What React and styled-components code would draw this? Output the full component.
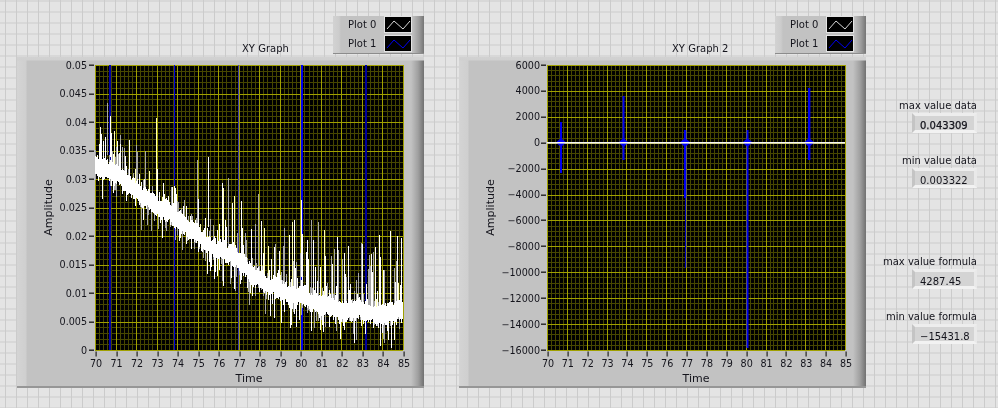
import React from "react";
import styled, { createGlobalStyle } from "styled-components";

const Global = createGlobalStyle`
  html, body { margin: 0; padding: 0; }
  body { width: 998px; height: 408px; overflow: hidden; background: #e3e3e3; font-family: "DejaVu Sans", "Liberation Sans", sans-serif; color: #14141c; }
`;

const Page = styled.div`
  width: 998px; height: 408px; box-sizing: border-box; display: flex; padding: 16px 0 0 17px;
  filter: blur(0.3px);
  background-color: #e4e4e4;
  background-image:
    linear-gradient(to right, #cbcbcb 1.5px, transparent 1.5px),
    linear-gradient(to bottom, #cbcbcb 1.5px, transparent 1.5px);
  background-size: 11px 11px;
  background-position: 5px 0.5px;
`;
const GraphColumn = styled.section`
  width: 407px; display: flex; flex-direction: column; margin-right: ${p => p.$gap}px;
`;
const GraphHeader = styled.header`
  height: 41px; display: flex; justify-content: space-between; align-items: flex-end;
`;
const GraphTitle = styled.h2`
  margin: 0 0 2px; padding-left: ${p => p.$indent}px; font-size: 10px; font-weight: 400; line-height: 13px; white-space: nowrap;
`;
const Legend = styled.div`
  width: 91px; height: 38px; box-sizing: border-box; margin-bottom: 3px; padding: 1px 13px 2px 15px;
  display: flex; flex-direction: column; justify-content: space-between;
  border-bottom: 1px solid #8c8c8c;
  background: linear-gradient(to right, #d2d2d2, #cccccc 6px, #c2c2c2 8px, #c2c2c2 calc(100% - 12px), #9c9c9c calc(100% - 5px), #757575 100%);
`;
const LegendRow = styled.div`
  height: 15px; display: flex; align-items: center; justify-content: space-between; font-size: 10px;
`;
const Swatch = styled.svg`
  width: 26px; height: 15px; display: block; background: #000; box-sizing: border-box; outline: 1px solid #e4e4e4;
`;
const Panel = styled.div`
  height: 331px; box-sizing: border-box; border-bottom: 2px solid #969696;
  background:
    linear-gradient(to bottom, #d2d2d2 0, #d0d0d0 3px, transparent 4px),
    linear-gradient(to right, #d4d4d4, #cfcfcf 9px, #c2c2c2 10px, #c2c2c2 calc(100% - 13px), #a0a0a0 calc(100% - 6px), #717171 100%);
`;
const ChartSvg = styled.svg`
  display: block; width: 407px; height: 329px;
  text { fill: #14141c; font-family: "DejaVu Sans", "Liberation Sans", sans-serif; }
`;
const Readouts = styled.aside`
  width: 65px; margin-left: 46px; padding-top: 82px; display: flex; flex-direction: column; align-items: flex-end;
`;
const Readout = styled.div`
  display: flex; flex-direction: column; align-items: flex-end; margin-bottom: ${p => p.$after}px;
`;
const ReadoutLabel = styled.label`
  font-size: 10px; line-height: 15px; white-space: nowrap;
`;
const ReadoutValue = styled.output`
  display: block; width: 65px; height: 20px; box-sizing: border-box; padding: 3px 0 0 5px; font-size: 10px; line-height: 13px;
  background: #d4d4d4; border: solid 3px; border-color: #ededed #e9e9e9 #f2f2f2 #c4c4c4;
  -webkit-text-stroke: ${p => (p.$strong ? "0.25px" : "0")};
`;

function rng(seed) {
  let a = seed;
  return () => {
    a |= 0; a = (a + 0x6d2b79f5) | 0;
    let t = Math.imul(a ^ (a >>> 15), 1 | a);
    t = (t + Math.imul(t ^ (t >>> 7), 61 | t)) ^ t;
    return ((t ^ (t >>> 14)) >>> 0) / 4294967296;
  };
}

const bandPoints = [[78, 107], [88, 110], [111, 126], [138, 150], [165, 166], [195, 193], [224, 206], [233, 220], [266, 236], [300, 246], [333, 255], [366, 256], [386, 255]];
function bandCenter(x) {
  for (let i = 1; i < bandPoints.length; i++) {
    const [x0, y0] = bandPoints[i - 1];
    const [x1, y1] = bandPoints[i];
    if (x <= x1) return y0 + ((x - x0) / (x1 - x0)) * (y1 - y0);
  }
  return 255;
}

function noisyTrace() {
  const r = rng(4211);
  let white = "", grey = "", pale = "";
  const seg = (x, a, b) => `M${x}.5 ${Math.round(a)}V${Math.round(b)}`;
  let wobble = 0;
  for (let x = 78; x < 386; x++) {
    wobble = wobble * 0.8 + (r() - 0.5) * 3.2;
    const c = bandCenter(x) + wobble;
    const right = x > 200;
    const top = c - 7 - r() * 5;
    const bot = c + 6 + r() * 5;
    white += seg(x, top, bot);
    if (r() < 0.6) {
      const h = Math.pow(r(), 2) * (right ? 70 : 32) + 4;
      const pick = r();
      if (pick < 0.38) grey += seg(x, top - h, top);
      else if (pick < 0.44) pale += seg(x, top - h, top);
      else white += seg(x, top - h, top);
    }
    if (r() < 0.55) {
      const h = Math.pow(r(), 2) * 22 + 2;
      if (r() < 0.4) grey += seg(x, bot, bot + h);
      else white += seg(x, bot, bot + h);
    }
  }
  [[90, 46, 98, 0], [93, 59, 100, 1], [88, 80, 105, 2], [139, 61, 155, 3], [180, 103, 150, 0], [191, 100, 170, 2], [284, 143, 220, 2], [285, 177, 215, 1], [83, 82, 105, 1], [103, 78, 115, 0]].forEach(([x, a, b, kind]) => {
    if (kind === 0) grey += seg(x, a, b);
    else if (kind === 3) pale += seg(x, a, b);
    else white += seg(x, a, b);
  });
  return { white, grey, pale };
}

const PlotFrame = ({ x0, x1, y0, y1, xLabels, yLabels, children, yGap }) => {
  const cols = xLabels.length - 1, rows = yLabels.length - 1;
  const dx = (x1 - x0) / cols, dy = (y1 - y0) / rows;
  const minorV = [], minorH = [], majorV = [], majorH = [];
  for (let i = 0; i <= cols * 5; i++) {
    const x = Math.round(x0 + (i * dx) / 5);
    (i % 5 ? minorV : majorV).push(x);
  }
  for (let i = 0; i <= rows * 5; i++) {
    const y = Math.round(y0 + (i * dy) / 5);
    (i % 5 ? minorH : majorH).push(y);
  }
  const path = (vs, hs) => vs.map(x => `M${x}.5 ${y0}V${y1}`).join("") + hs.map(y => `M${x0} ${y}.5H${x1}`).join("");
  return (
    <>
      <rect x={x0} y={y0} width={x1 - x0} height={y1 - y0} fill="#000" />
      <path d={path(minorV, minorH)} stroke="#464600" strokeWidth="1" shapeRendering="crispEdges" />
      <path d={path(majorV, majorH)} stroke="#a0a000" strokeWidth="1" shapeRendering="crispEdges" />
      {children}
      {yLabels.map((l, i) => (
        <g key={l}>
          <rect x={x0 - 6} y={Math.round(y0 + i * dy) - 0.5} width="5" height="1.4" fill="#222" />
          <text x={x0 - yGap} y={y0 + i * dy + 3.5} fontSize="9.6" textAnchor="end">{l}</text>
        </g>
      ))}
      {xLabels.map((l, i) => (
        <g key={l}>
          <rect x={Math.round(x0 + i * dx) + 0.5} y={y1 + 1.5} width="1.2" height="5" fill="#222" />
          <text x={x0 + i * dx + 1} y={y1 + 17} fontSize="9.6" textAnchor="middle">{l}</text>
        </g>
      ))}
      <text transform={`translate(35 ${(y0 + y1) / 2}) rotate(-90)`} fontSize="11" textAnchor="middle">Amplitude</text>
      <text x={(x0 + x1) / 2} y={y1 + 32} fontSize="11" textAnchor="middle">Time</text>
    </>
  );
};

const xLabels = Array.from({ length: 16 }, (_, i) => String(70 + i));

const LeftChart = () => {
  const t = noisyTrace();
  return (
    <ChartSvg viewBox="0 0 407 329">
      <PlotFrame x0={78} x1={386} y0={8} y1={293} yGap={8} xLabels={xLabels}
        yLabels={["0.05", "0.045", "0.04", "0.035", "0.03", "0.025", "0.02", "0.015", "0.01", "0.005", "0"]}>
        <g shapeRendering="crispEdges">
          <rect x="92" y="8" width="2" height="285" fill="#0000a8" />
          <rect x="157" y="8" width="1" height="285" fill="#0000e0" />
          <rect x="221" y="8" width="1" height="285" fill="#3c3ca8" />
          <rect x="284" y="8" width="2" height="285" fill="#0000f0" />
          <rect x="348" y="8" width="2" height="285" fill="#00009c" />
          <path d={t.grey} stroke="#a8a8a8" />
          <path d={t.pale} stroke="#ffffb4" />
          <path d={t.white} stroke="#fff" />
        </g>
      </PlotFrame>
    </ChartSvg>
  );
};

const blips = [
  { x: 101, top: 65, bot: 116, w: 2 },
  { x: 163.5, top: 39, bot: 103, w: 2 },
  { x: 225, top: 73, bot: 141, w: 2.4 },
  { x: 287.5, top: 73, bot: 291, w: 2 },
  { x: 349, top: 31, bot: 103, w: 2.4 },
];

const RightChart = () => (
  <ChartSvg viewBox="0 0 407 329">
    <PlotFrame x0={88} x1={386} y0={8} y1={293} yGap={7} xLabels={xLabels}
      yLabels={["6000", "4000", "2000", "0", "\u22122000", "\u22124000", "\u22126000", "\u22128000", "\u221210000", "\u221212000", "\u221214000", "\u221216000"]}>
      <rect x="226" y="141" width="1.2" height="70" fill="#0000c0" />
      {blips.map(b => (
        <g key={b.x} fill="#0000f4">
          <rect x={b.x} y={b.top} width={b.w} height={b.bot - b.top} />
          <polygon points={`${b.x - 4},85.5 ${b.x + 1},81 ${b.x + b.w + 4},85.5 ${b.x + 1},90`} />
        </g>
      ))}
      <rect x="88" y="85" width="298" height="1.6" fill="#f4f4f4" />
    </PlotFrame>
  </ChartSvg>
);

const TraceSwatch = ({ color }) => (
  <Swatch viewBox="0 0 26 15">
    <polyline points="2,12 9,4 18,12 25,4" fill="none" stroke={color} strokeWidth="1" />
  </Swatch>
);

const PlotLegend = () => (
  <Legend>
    <LegendRow>Plot 0<TraceSwatch color="#d8d8d8" /></LegendRow>
    <LegendRow>Plot 1<TraceSwatch color="#0000f0" /></LegendRow>
  </Legend>
);

export default function App() {
  return (
    <Page>
      <Global />
      <GraphColumn $gap={35}>
        <GraphHeader><GraphTitle $indent={225}>XY Graph</GraphTitle><PlotLegend /></GraphHeader>
        <Panel><LeftChart /></Panel>
      </GraphColumn>
      <GraphColumn $gap={0}>
        <GraphHeader><GraphTitle $indent={213}>XY Graph 2</GraphTitle><PlotLegend /></GraphHeader>
        <Panel><RightChart /></Panel>
      </GraphColumn>
      <Readouts>
        <Readout $after={20}><ReadoutLabel>max value data</ReadoutLabel><ReadoutValue $strong>0.043309</ReadoutValue></Readout>
        <Readout $after={66}><ReadoutLabel>min value data</ReadoutLabel><ReadoutValue>0.003322</ReadoutValue></Readout>
        <Readout $after={20}><ReadoutLabel>max value formula</ReadoutLabel><ReadoutValue>4287.45</ReadoutValue></Readout>
        <Readout $after={0}><ReadoutLabel>min value formula</ReadoutLabel><ReadoutValue>{"\u221215431.8"}</ReadoutValue></Readout>
      </Readouts>
    </Page>
  );
}
